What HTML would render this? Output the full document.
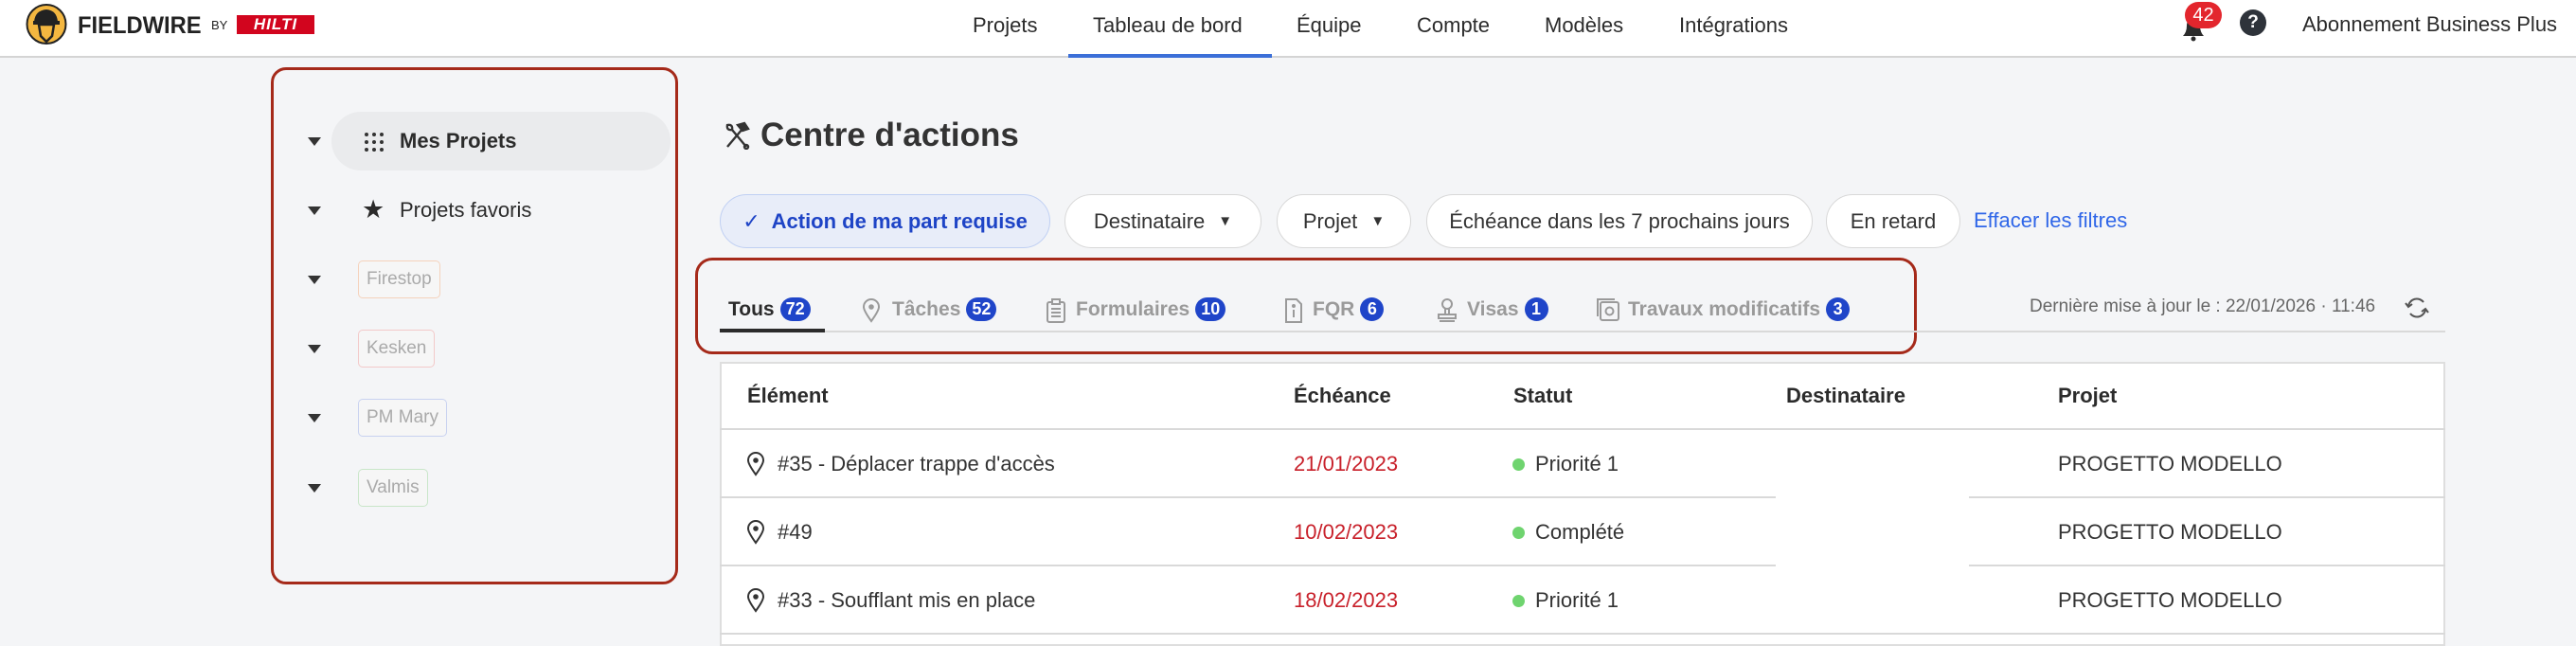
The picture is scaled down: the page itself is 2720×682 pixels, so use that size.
<!DOCTYPE html>
<html><head><meta charset="utf-8">
<style>
*{margin:0;padding:0;box-sizing:border-box}
body{width:2720px;height:674px;overflow:hidden;background:#f4f5f7;font-family:"Liberation Sans",sans-serif;color:#333;position:relative}
.a{position:absolute;white-space:nowrap}
.hdr{position:absolute;left:0;top:0;width:2720px;height:61px;background:#fff;border-bottom:2px solid #d4d4d4}
.nav{font-size:22px;color:#2b2b2b;top:14px}
.chip{position:absolute;top:205px;height:57px;border:1.5px solid #d8d8d8;border-radius:29px;background:#fff;font-size:22px;color:#333;display:flex;align-items:center;justify-content:center}
.tab{position:absolute;top:314px;font-size:21px;font-weight:bold;color:#9a9a9a;display:flex;align-items:center}
.bdg{display:inline-block;background:#1f45c9;color:#fff;border-radius:13px;height:25px;min-width:25px;padding:0 6px;font-size:18px;line-height:25px;text-align:center;margin-left:6px;font-weight:bold}
.tag{position:absolute;left:378px;height:40px;border:1.5px solid;border-radius:5px;font-size:19px;color:#aaa;line-height:37px;padding:0 8px;background:#f6f6f6}
.tri{position:absolute;left:325px;width:0;height:0;border-left:7px solid transparent;border-right:7px solid transparent;border-top:9px solid #333}
.th{position:absolute;top:405px;font-size:22px;font-weight:bold;color:#2b2b2b}
.td{position:absolute;font-size:22px;color:#333}
.hl{position:absolute;left:760px;width:1822px;height:2px;background:#d9d9d9}
</style></head><body>
<div class="hdr"></div>
<svg class="a" style="left:27px;top:4px" width="44" height="43" viewBox="0 0 44 43"><circle cx="22" cy="21.5" r="20.5" fill="#f4b740" stroke="#222" stroke-width="2"/><path d="M9 19 Q10 7 22 6 Q33 7 34 19 L34 21 L9 21Z" fill="#222"/><rect x="8" y="18" width="28" height="4" fill="#222"/><path d="M14 22 L16 34 L22 40 L28 34 L30 22Z" fill="none" stroke="#222" stroke-width="2.5"/></svg>
<div class="a" style="left:82px;top:13px;font-size:25px;font-weight:bold;color:#222;transform:scaleX(0.95);transform-origin:left">FIELDWIRE</div>
<div class="a" style="left:223px;top:19px;font-size:13px;color:#222">BY</div>
<div class="a" style="left:250px;top:16px;width:82px;height:20px;background:#d2051e;color:#fff;font-weight:bold;font-style:italic;font-size:17px;line-height:20px;text-align:center;letter-spacing:1px">HILTI</div>

<div class="a nav" style="left:1027px">Projets</div>
<div class="a nav" style="left:1154px">Tableau de bord</div>
<div class="a" style="left:1128px;top:57px;width:215px;height:4px;background:#3b6fd8"></div>
<div class="a nav" style="left:1369px">Équipe</div>
<div class="a nav" style="left:1496px">Compte</div>
<div class="a nav" style="left:1631px">Modèles</div>
<div class="a nav" style="left:1773px">Intégrations</div>

<svg class="a" style="left:2301px;top:14px" width="30" height="30" viewBox="0 0 30 30"><path d="M4 24 Q8 20 8 13 Q8 6 15 6 Q22 6 22 13 Q22 20 26 24Z" fill="#2b2b2b"/><circle cx="15" cy="27" r="2.5" fill="#2b2b2b"/></svg>
<div class="a" style="left:2307px;top:2px;width:39px;height:28px;border-radius:14px;background:#e3262d;color:#fff;font-size:20px;line-height:28px;text-align:center">42</div>
<div class="a" style="left:2365px;top:10px;width:28px;height:28px;border-radius:50%;background:#2e333a;color:#fff;font-size:19px;font-weight:bold;line-height:28px;text-align:center">?</div>
<div class="a" style="left:2431px;top:13px;font-size:22px;color:#2b2b2b">Abonnement Business Plus</div>

<!-- sidebar -->
<div class="a" style="left:286px;top:71px;width:430px;height:546px;border:3.5px solid #a52a1a;border-radius:16px"></div>
<div class="a" style="left:350px;top:118px;width:358px;height:62px;border-radius:31px;background:#eaebed"></div>
<div class="tri" style="top:145px"></div>
<div class="tri" style="top:218px"></div>
<div class="tri" style="top:291px"></div>
<div class="tri" style="top:364px"></div>
<div class="tri" style="top:437px"></div>
<div class="tri" style="top:511px"></div>
<svg class="a" style="left:384px;top:139px" width="22" height="22" viewBox="0 0 22 22" fill="#333"><circle cx="3" cy="3" r="2"/><circle cx="11" cy="3" r="2"/><circle cx="19" cy="3" r="2"/><circle cx="3" cy="11" r="2"/><circle cx="11" cy="11" r="2"/><circle cx="19" cy="11" r="2"/><circle cx="3" cy="19" r="2"/><circle cx="11" cy="19" r="2"/><circle cx="19" cy="19" r="2"/></svg>
<div class="a" style="left:422px;top:136px;font-size:22px;font-weight:bold;color:#2b2b2b">Mes Projets</div>
<div class="a" style="left:382px;top:206px;font-size:27px;color:#2b2b2b">★</div>
<div class="a" style="left:422px;top:209px;font-size:22px;color:#2b2b2b">Projets favoris</div>
<div class="tag" style="top:275px;border-color:#f5d2bc">Firestop</div>
<div class="tag" style="top:348px;border-color:#f3c9c9">Kesken</div>
<div class="tag" style="top:421px;border-color:#c8d2f0">PM Mary</div>
<div class="tag" style="top:495px;border-color:#c9e6c9">Valmis</div>

<!-- main -->
<svg class="a" style="left:764px;top:128px" width="28" height="30" viewBox="0 0 28 30" fill="none" stroke="#333" stroke-width="2.4"><path d="M4 27 L20 8"/><path d="M15 4 L22 2 L26 8 L20 10Z" fill="#333"/><path d="M24 27 L9 9"/><path d="M4 4 Q3 10 9 9 Q10 3 4 4Z"/><circle cx="24" cy="27" r="2"/></svg>
<div class="a" style="left:803px;top:123px;font-size:35px;font-weight:bold;color:#333">Centre d'actions</div>

<div class="chip" style="left:760px;width:349px;background:#e8edf9;border-color:#c0d0f3;color:#1e44c6;font-weight:bold">
<span style="font-weight:normal;margin-right:12px;font-size:22px">✓</span>Action de ma part requise</div>
<div class="chip" style="left:1124px;width:208px">Destinataire<span style="font-size:15px;margin-left:14px">▼</span></div>
<div class="chip" style="left:1348px;width:142px">Projet<span style="font-size:15px;margin-left:14px">▼</span></div>
<div class="chip" style="left:1506px;width:408px">Échéance dans les 7 prochains jours</div>
<div class="chip" style="left:1928px;width:142px">En retard</div>
<div class="a" style="left:2084px;top:220px;font-size:22px;color:#2f66e8">Effacer les filtres</div>

<div class="a" style="left:734px;top:272px;width:1290px;height:102px;border:3.5px solid #a52a1a;border-radius:18px"></div>
<div class="a" style="left:760px;top:349px;width:1822px;height:2px;background:#d9d9d9"></div>
<div class="a" style="left:760px;top:347px;width:111px;height:4px;background:#2b2b2b"></div>
<div class="tab" style="left:769px;color:#2b2b2b">Tous<span class="bdg">72</span></div>
<svg class="a" style="left:911px;top:315px" width="18" height="26" viewBox="0 0 18 26" fill="none" stroke="#9a9a9a" stroke-width="2"><path d="M9 24 Q1 13 1 9 A8 8 0 0 1 17 9 Q17 13 9 24Z"/><circle cx="9" cy="9" r="1.8" fill="#9a9a9a"/></svg>
<div class="tab" style="left:942px">Tâches<span class="bdg">52</span></div>
<svg class="a" style="left:1105px;top:315px" width="20" height="26" viewBox="0 0 20 26" fill="none" stroke="#9a9a9a" stroke-width="2"><rect x="1" y="4" width="18" height="21" rx="2"/><rect x="6" y="1" width="8" height="5" fill="#f4f5f7"/><path d="M5 11h10M5 15h10M5 19h10"/></svg>
<div class="tab" style="left:1136px">Formulaires<span class="bdg">10</span></div>
<svg class="a" style="left:1357px;top:315px" width="18" height="26" viewBox="0 0 18 26" fill="none" stroke="#9a9a9a" stroke-width="2"><path d="M1 1h11l5 5v19H1Z"/><path d="M9 12v8"/><circle cx="9" cy="8" r="1" fill="#9a9a9a"/></svg>
<div class="tab" style="left:1386px">FQR<span class="bdg">6</span></div>
<svg class="a" style="left:1517px;top:315px" width="22" height="26" viewBox="0 0 22 26" fill="none" stroke="#9a9a9a" stroke-width="2"><circle cx="11" cy="6" r="5"/><path d="M9 11v5M13 11v5M2 17h18v4H2ZM3 24h16"/></svg>
<div class="tab" style="left:1549px">Visas<span class="bdg">1</span></div>
<svg class="a" style="left:1686px;top:315px" width="24" height="24" viewBox="0 0 24 24" fill="none" stroke="#9a9a9a" stroke-width="2"><rect x="4" y="4" width="19" height="19" rx="2"/><path d="M1 19V1h18"/><circle cx="13.5" cy="13.5" r="4"/></svg>
<div class="tab" style="left:1719px">Travaux modificatifs<span class="bdg">3</span></div>
<div class="a" style="left:2143px;top:313px;font-size:19px;color:#666">Dernière mise à jour le : 22/01/2026 · 11:46</div>
<svg class="a" style="left:2538px;top:311px" width="28" height="28" viewBox="0 0 28 28" fill="none" stroke="#555" stroke-width="2"><path d="M5 12 A9 9 0 0 1 21 8"/><path d="M23 16 A9 9 0 0 1 7 20"/><path d="M2 9l3 4 4-3M26 19l-3-4-4 3"/></svg>

<!-- table -->
<div class="a" style="left:760px;top:382px;width:1822px;height:300px;background:#fff;border:2px solid #dedede"></div>
<div class="th" style="left:789px">Élément</div>
<div class="th" style="left:1366px">Échéance</div>
<div class="th" style="left:1598px">Statut</div>
<div class="th" style="left:1886px">Destinataire</div>
<div class="th" style="left:2173px">Projet</div>
<div class="hl" style="top:452px"></div>
<div class="hl" style="top:524px"></div>
<div class="hl" style="top:596px"></div>
<div class="hl" style="top:668px"></div>

<svg class="a" style="left:789px;top:477px" width="18" height="26" viewBox="0 0 18 26" fill="none" stroke="#333" stroke-width="2"><path d="M9 24 Q1 13 1 9 A8 8 0 0 1 17 9 Q17 13 9 24Z"/><circle cx="9" cy="9" r="1.8" fill="#333"/></svg>
<div class="td" style="left:821px;top:477px">#35 - Déplacer trappe d'accès</div>
<div class="td" style="left:1366px;top:477px;color:#c8202a">21/01/2023</div>
<div class="a" style="left:1597px;top:484px;width:13px;height:13px;border-radius:50%;background:#6fd46f"></div>
<div class="td" style="left:1621px;top:477px">Priorité 1</div>
<div class="td" style="left:2173px;top:477px">PROGETTO MODELLO</div>

<svg class="a" style="left:789px;top:549px" width="18" height="26" viewBox="0 0 18 26" fill="none" stroke="#333" stroke-width="2"><path d="M9 24 Q1 13 1 9 A8 8 0 0 1 17 9 Q17 13 9 24Z"/><circle cx="9" cy="9" r="1.8" fill="#333"/></svg>
<div class="td" style="left:821px;top:549px">#49</div>
<div class="td" style="left:1366px;top:549px;color:#c8202a">10/02/2023</div>
<div class="a" style="left:1597px;top:556px;width:13px;height:13px;border-radius:50%;background:#6fd46f"></div>
<div class="td" style="left:1621px;top:549px">Complété</div>
<div class="td" style="left:2173px;top:549px">PROGETTO MODELLO</div>

<svg class="a" style="left:789px;top:621px" width="18" height="26" viewBox="0 0 18 26" fill="none" stroke="#333" stroke-width="2"><path d="M9 24 Q1 13 1 9 A8 8 0 0 1 17 9 Q17 13 9 24Z"/><circle cx="9" cy="9" r="1.8" fill="#333"/></svg>
<div class="td" style="left:821px;top:621px">#33 - Soufflant mis en place</div>
<div class="td" style="left:1366px;top:621px;color:#c8202a">18/02/2023</div>
<div class="a" style="left:1597px;top:628px;width:13px;height:13px;border-radius:50%;background:#6fd46f"></div>
<div class="td" style="left:1621px;top:621px">Priorité 1</div>
<div class="td" style="left:2173px;top:621px">PROGETTO MODELLO</div>

<div class="a" style="left:1875px;top:470px;width:204px;height:196px;background:#fff"></div>
</body></html>
